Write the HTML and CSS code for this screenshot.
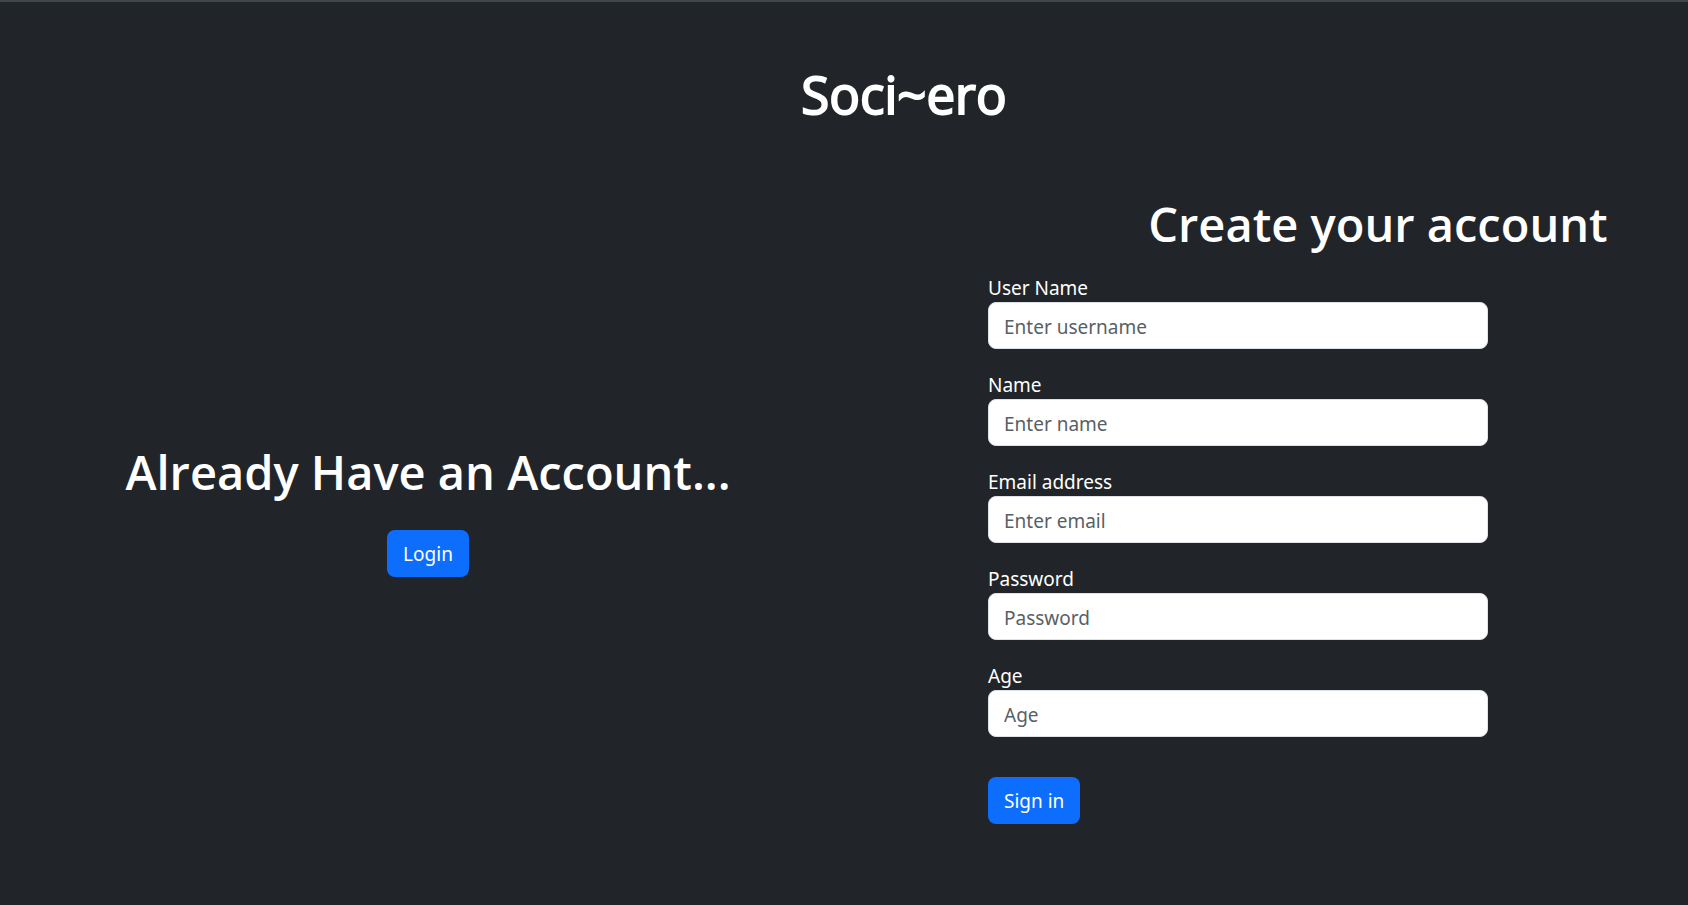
FILE: index.html
```html
<!DOCTYPE html>
<html lang="en">
<head>
<meta charset="utf-8">
<meta name="viewport" content="width=device-width, initial-scale=1">
<title>Soci~ero</title>
<link rel="stylesheet" href="styles.css">
</head>
<body>
<header class="brand"><h1 class="brand-name">Soci~ero</h1></header>
<main class="columns">
  <section class="login">
    <h2 class="heading">Already Have an Account...</h2>
    <button class="btn" type="button">Login</button>
  </section>
  <section class="signup">
    <h2 class="heading signup-heading">Create your account</h2>
    <form class="form">
      <div class="field"><label for="username">User Name</label><input id="username" type="text" placeholder="Enter username"></div>
      <div class="field"><label for="name">Name</label><input id="name" type="text" placeholder="Enter name"></div>
      <div class="field"><label for="email">Email address</label><input id="email" type="email" placeholder="Enter email"></div>
      <div class="field"><label for="password">Password</label><input id="password" type="password" placeholder="Password"></div>
      <div class="field"><label for="age">Age</label><input id="age" type="text" placeholder="Age"></div>
      <button class="btn form-submit" type="submit">Sign in</button>
    </form>
  </section>
</main>
</body>
</html>
```
FILE: styles.css
```css
* { box-sizing: border-box; }
body {
  margin: 0;
  min-height: 100vh;
  border-top: 2px solid #40484b;
  background: #212529;
  color: #fff;
  font: 19px/28px "Segoe UI", "Noto Sans", sans-serif;
}
.brand { padding: 62px 0 0 120px; text-align: center; }
.brand-name {
  margin: 0;
  font: 400 51px/60px "Comic Sans MS", "Open Sans", sans-serif;
  -webkit-text-stroke: 2px #fff;
}
.columns { display: grid; grid-template-columns: 1fr 1fr; padding-top: 70px; }
.login {
  display: flex;
  flex-direction: column;
  align-items: center;
  padding: 248px 0 0 12px;
}
.heading {
  margin: 0;
  font-family: "Segoe UI", "Open Sans", sans-serif;
  font-size: 47px;
  font-weight: 600;
  line-height: 60px;
  text-align: center;
}
.login .heading { margin-bottom: 28px; }
.signup-heading { padding-left: 224px; }
.form {
  display: flex;
  flex-direction: column;
  align-items: flex-start;
  gap: 22px;
  width: 100%;
  max-width: 644px;
  padding: 20px 0 20px 144px;
}
.field { display: flex; flex-direction: column; width: 100%; }
.field input {
  width: 100%;
  height: 47px;
  padding: 2px 15px 0;
  border: 1px solid #dee2e6;
  border-radius: 8px;
  background: #fff;
  color: #212529;
  font: inherit;
}
.field input::placeholder { color: #595f65; opacity: 1; }
.btn {
  height: 47px;
  padding: 1px 16px 0;
  border: 0;
  border-radius: 8px;
  background: #0d6efd;
  color: #fff;
  font: inherit;
  cursor: pointer;
}
.form-submit { margin-top: 18px; }
```
